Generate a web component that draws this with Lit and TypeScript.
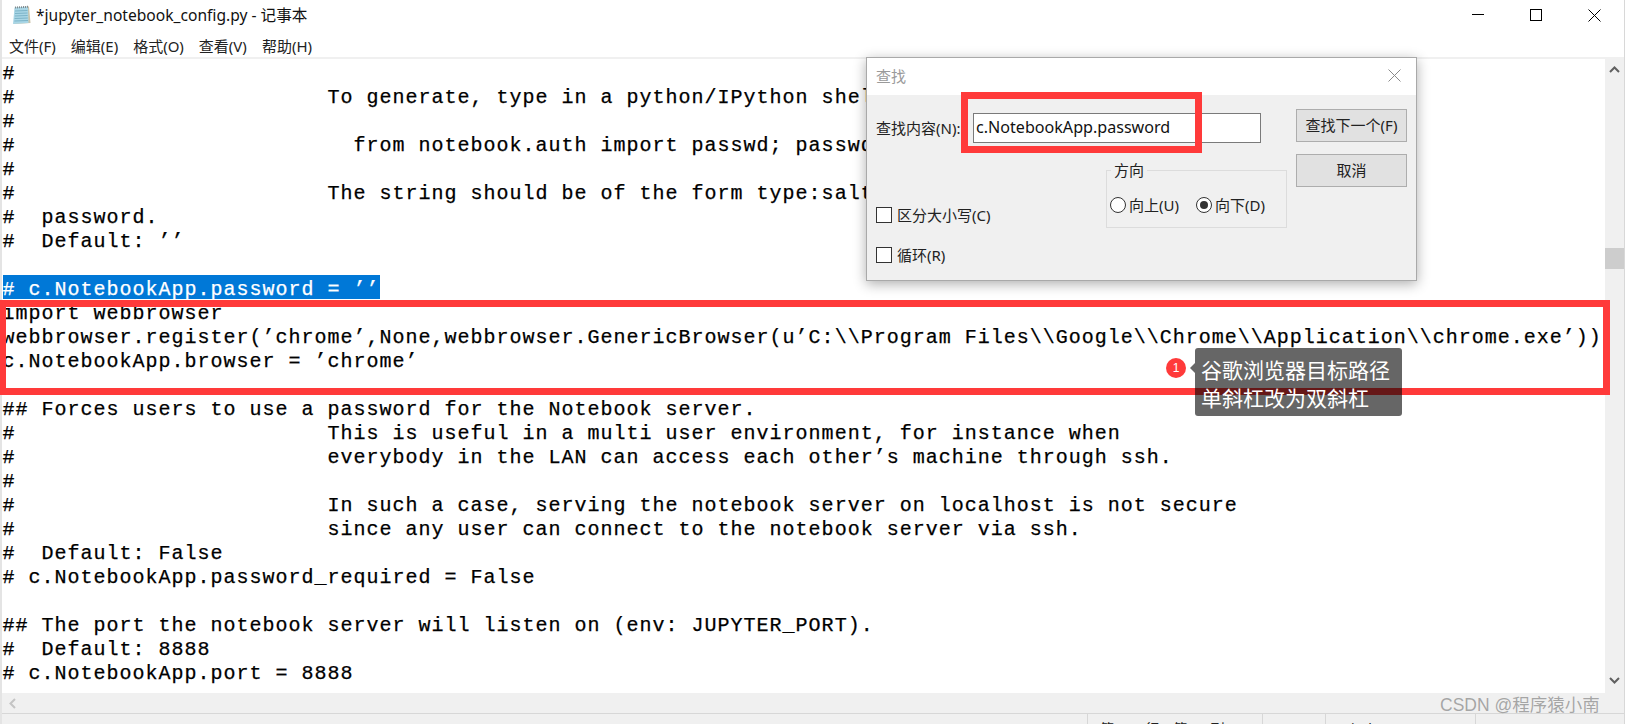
import { LitElement, html, css, svg } from "lit";
import { customElement } from "lit/decorators.js";

const LINES: string[] = [
  "#",
  "#                        To generate, type in a python/IPython shell:",
  "#",
  "#                          from notebook.auth import passwd; passwd()",
  "#",
  "#                        The string should be of the form type:salt:hashed-",
  "#  password.",
  "#  Default: ’’",
  "",
  "# c.NotebookApp.password = ’’",
  "import webbrowser",
  "webbrowser.register(’chrome’,None,webbrowser.GenericBrowser(u’C:\\\\Program Files\\\\Google\\\\Chrome\\\\Application\\\\chrome.exe’))",
  "c.NotebookApp.browser = ’chrome’",
  "",
  "## Forces users to use a password for the Notebook server.",
  "#                        This is useful in a multi user environment, for instance when",
  "#                        everybody in the LAN can access each other’s machine through ssh.",
  "#",
  "#                        In such a case, serving the notebook server on localhost is not secure",
  "#                        since any user can connect to the notebook server via ssh.",
  "#  Default: False",
  "# c.NotebookApp.password_required = False",
  "",
  "## The port the notebook server will listen on (env: JUPYTER_PORT).",
  "#  Default: 8888",
  "# c.NotebookApp.port = 8888",
];
const SELECTED = 9;
const MENUS = ["文件(F)", "编辑(E)", "格式(O)", "查看(V)", "帮助(H)"];

const notepadIcon = svg`<svg class="app-icon" width="20" height="20" viewBox="0 0 20 20">
  <path d="M3 2.5 L17 1.5 L18.5 18 L2 19 Z" fill="#c9c2a8"/>
  <path d="M2.5 2.5 L16 1.8 L16.5 18 L1 19 Z" fill="#a9d6e6"/>
  <path d="M3 6 L15.5 5.5 M3 8.5 L15.5 8 M2.8 11 L15.6 10.5 M2.6 13.5 L15.8 13 M2.4 16 L16 15.5" stroke="#6fa9bf" stroke-width="0.8"/>
  <path d="M3 2.5 L16 1.8" stroke="#7d8a90" stroke-width="2" stroke-dasharray="1 1"/>
</svg>`;

@customElement("app-root")
export class AppRoot extends LitElement {
  static styles = css`
    :host {
      display: block;
      position: relative;
      width: 1627px;
      height: 724px;
      overflow: hidden;
      background: #fff;
      font-family: "Noto Sans", "Noto Sans CJK SC", sans-serif;
      color: #1a1a1a;
    }
    .window {
      width: 1625px;
      height: 724px;
      box-sizing: border-box;
      border-left: 2px solid #e4e4e4;
      border-right: 1px solid #d8d8d8;
      display: flex;
      flex-direction: column;
      background: #fff;
    }
    .titlebar {
      flex: none;
      height: 33px;
      display: flex;
      align-items: center;
      padding-left: 10px;
    }
    .app-icon { flex: none; margin-right: 4px; margin-top: -4px; }
    .title { flex: 1; font-size: 15.6px; color: #111; position: relative; top: -2px; white-space: pre; }
    .winbtns { display: flex; align-items: center; margin-right: 23px; gap: 46px; margin-top: -3px; }
    .winbtns svg { display: block; }
    .menubar {
      flex: none;
      height: 24px;
      display: flex;
      align-items: center;
      gap: 15px;
      padding-left: 7px;
      font-size: 15px;
      color: #222;
      border-bottom: 2px solid #f0f0f0;
    }
    .editor { flex: 1; min-height: 0; display: flex; }
    .text {
      flex: 1;
      min-width: 0;
      overflow: hidden;
      font-family: "Liberation Mono", monospace;
      font-size: 20px;
      letter-spacing: 1px;
      line-height: 30px;
      color: #000;
      -webkit-text-stroke: 0.25px currentColor;
    }
    .line { height: 24px; white-space: pre; padding-left: 0.5px; }
    .sel { background: #0078d7; color: #fff; display: inline-block; height: 24px; }
    .vscroll {
      flex: none;
      width: 19px;
      background: #f0f0f0;
      display: flex;
      flex-direction: column;
      align-items: center;
    }
    .vscroll .up { margin-top: 7px; }
    .vscroll .thumb { width: 19px; height: 21px; background: #cdcdcd; margin-top: 175px; }
    .vscroll .down { margin-top: auto; margin-bottom: 9px; }
    .hscroll {
      flex: none;
      height: 20px;
      background: #f0f0f0;
      display: flex;
      align-items: center;
      padding-left: 7px;
    }
    .status {
      flex: none;
      height: 11px;
      box-sizing: border-box;
      border-top: 1px solid #d7d7d7;
      background: #f0f0f0;
      display: flex;
      font-size: 14px;
      color: #222;
      overflow: hidden;
    }
    .status .spacer { width: 1085px; flex: none; }
    .cell {
      flex: none;
      height: 30px;
      box-sizing: border-box;
      border-left: 1px solid #d7d7d7;
      padding: 5px 0 0 12px;
      line-height: 20px;
      white-space: pre;
    }
    .c1 { width: 175px; }
    .c2 { width: 63px; padding-left: 10px; }
    .c3 { width: 150px; }
    .c4 { flex: 1; padding-left: 9px; }

    .dialog {
      position: absolute;
      left: 866px;
      top: 57px;
      width: 551px;
      height: 224px;
      box-sizing: border-box;
      border: 1px solid #a9a9a9;
      box-shadow: 0 3px 12px rgba(0, 0, 0, 0.32);
      background: #f0f0f0;
      display: flex;
      flex-direction: column;
      font-size: 15px;
      color: #222;
    }
    .dlg-title {
      flex: none;
      height: 37px;
      background: #fff;
      display: flex;
      align-items: center;
      justify-content: space-between;
      padding: 0 15px 2px 9px;
      box-sizing: border-box;
      color: #9a9a9a;
    }
    .dlg-body { flex: 1; display: flex; padding: 18px 9px 0 9px; gap: 9px; }
    .dlg-main { width: 411px; flex: none; display: flex; flex-direction: column; }
    .find-row { display: flex; align-items: center; height: 30px; }
    .find-label { width: 97px; flex: none; white-space: pre; font-size: 15px; margin-top: -2px; }
    .find-input {
      width: 288px;
      height: 30px;
      box-sizing: border-box;
      border: 1px solid #7a7a7a;
      background: #fff;
      padding-left: 2px;
      font-size: 16.1px;
      line-height: 26px;
      color: #111;
    }
    .opts { display: flex; margin-top: 17px; }
    .checks { width: 230px; flex: none; display: flex; flex-direction: column; gap: 19px; padding-top: 44px; }
    .check { display: flex; align-items: center; gap: 5px; height: 21px; white-space: pre; }
    .box { width: 14px; height: 14px; border: 1px solid #333; background: #fff; flex: none; }
    fieldset {
      width: 182px;
      height: 68px;
      box-sizing: border-box;
      margin: 0;
      padding: 14px 0 0 3px;
      border: 1px solid #dcdcdc;
      display: flex;
      gap: 17px;
    }
    legend { padding: 0 3px; margin-left: 1px; line-height: 20px; }
    .radio { display: flex; align-items: center; gap: 3px; height: 21px; white-space: pre; }
    .circle {
      width: 14px;
      height: 14px;
      border: 1px solid #333;
      border-radius: 50%;
      background: #fff;
      flex: none;
      display: flex;
      align-items: center;
      justify-content: center;
    }
    .circle.on::after { content: ""; width: 8px; height: 8px; border-radius: 50%; background: #333; }
    .dlg-btns { display: flex; flex-direction: column; gap: 12px; margin-top: -4px; }
    .btn {
      width: 111px;
      height: 33px;
      box-sizing: border-box;
      background: #e1e1e1;
      border: 1px solid #adadad;
      display: flex;
      align-items: center;
      justify-content: center;
      padding-bottom: 2px;
      white-space: pre;
    }

    .mark { position: absolute; box-sizing: border-box; border: 7px solid #ff3a3a; }
    .mark.big { left: 0; top: 300px; width: 1610px; height: 95px; border-left-width: 6px; }
    .mark.small { left: 961px; top: 92px; width: 241px; height: 61px; }

    .badge {
      position: absolute;
      left: 1166px;
      top: 358px;
      width: 20px;
      height: 20px;
      border-radius: 50%;
      background: #ff3a3a;
      color: #fff;
      font-family: "Liberation Sans", sans-serif;
      font-size: 12px;
      line-height: 20px;
      text-align: center;
    }
    .tip {
      position: absolute;
      left: 1195px;
      top: 348px;
      width: 207px;
      height: 68px;
      box-sizing: border-box;
      padding: 7px 0 0 6px;
      border-radius: 3px;
      background: rgba(0, 0, 0, 0.6);
      color: #fff;
      font-family: "Noto Sans CJK SC", sans-serif;
      font-size: 21px;
      line-height: 28px;
      white-space: pre;
    }
    .tip::before {
      content: "";
      position: absolute;
      left: -5px;
      top: 15px;
      border-style: solid;
      border-width: 5px 5px 5px 0;
      border-color: transparent rgba(0, 0, 0, 0.6) transparent transparent;
    }
    .wm {
      position: absolute;
      left: 1440px;
      top: 693px;
      font-family: "Liberation Sans", "Noto Sans CJK SC", sans-serif;
      font-size: 17.5px;
      line-height: 24px;
      color: rgba(90, 90, 90, 0.5);
      white-space: pre;
    }
  `;

  render() {
    return html`
      <div class="window">
        <div class="titlebar">
          ${notepadIcon}
          <div class="title">*jupyter_notebook_config.py - 记事本</div>
          <div class="winbtns">
            <svg width="12" height="12" viewBox="0 0 12 12"><path d="M0 5.5H12" stroke="#000" stroke-width="1"/></svg>
            <svg width="12" height="12" viewBox="0 0 12 12"><rect x="0.5" y="0.5" width="11" height="11" fill="none" stroke="#000"/></svg>
            <svg width="13" height="13" viewBox="0 0 13 13"><path d="M0.5 0.5L12.5 12.5M12.5 0.5L0.5 12.5" stroke="#000" stroke-width="1"/></svg>
          </div>
        </div>
        <div class="menubar">${MENUS.map((m) => html`<span>${m}</span>`)}</div>
        <div class="editor">
          <div class="text">
            ${LINES.map((l, i) =>
              i === SELECTED
                ? html`<div class="line"><span class="sel">${l}</span></div>`
                : html`<div class="line">${l}</div>`
            )}
          </div>
          <div class="vscroll">
            <svg class="up" width="11" height="7" viewBox="0 0 11 7"><path d="M1 6L5.5 1.5L10 6" fill="none" stroke="#606060" stroke-width="2"/></svg>
            <div class="thumb"></div>
            <svg class="down" width="11" height="7" viewBox="0 0 11 7"><path d="M1 1L5.5 5.5L10 1" fill="none" stroke="#606060" stroke-width="2"/></svg>
          </div>
        </div>
        <div class="hscroll">
          <svg width="7" height="11" viewBox="0 0 7 11"><path d="M6 1L1.5 5.5L6 10" fill="none" stroke="#c4c4c4" stroke-width="2"/></svg>
        </div>
        <div class="status">
          <div class="spacer"></div>
          <div class="cell c1">第 116 行，第 30 列</div>
          <div class="cell c2">90%</div>
          <div class="cell c3">Windows (CRLF)</div>
          <div class="cell c4">UTF-8</div>
        </div>
      </div>

      <div class="dialog">
        <div class="dlg-title">
          <span>查找</span>
          <svg width="13" height="13" viewBox="0 0 13 13"><path d="M0.5 0.5L12.5 12.5M12.5 0.5L0.5 12.5" stroke="#8a8a8a" stroke-width="1"/></svg>
        </div>
        <div class="dlg-body">
          <div class="dlg-main">
            <div class="find-row">
              <span class="find-label">查找内容(N):</span>
              <div class="find-input">c.NotebookApp.password</div>
            </div>
            <div class="opts">
              <div class="checks">
                <div class="check"><span class="box"></span>区分大小写(C)</div>
                <div class="check"><span class="box"></span>循环(R)</div>
              </div>
              <fieldset>
                <legend>方向</legend>
                <div class="radio"><span class="circle"></span>向上(U)</div>
                <div class="radio"><span class="circle on"></span>向下(D)</div>
              </fieldset>
            </div>
          </div>
          <div class="dlg-btns">
            <div class="btn">查找下一个(F)</div>
            <div class="btn">取消</div>
          </div>
        </div>
      </div>

      <div class="mark small"></div>
      <div class="mark big"></div>
      <div class="badge">1</div>
      <div class="tip">谷歌浏览器目标路径
单斜杠改为双斜杠</div>
      <div class="wm">CSDN @程序猿小南</div>
    `;
  }
}
